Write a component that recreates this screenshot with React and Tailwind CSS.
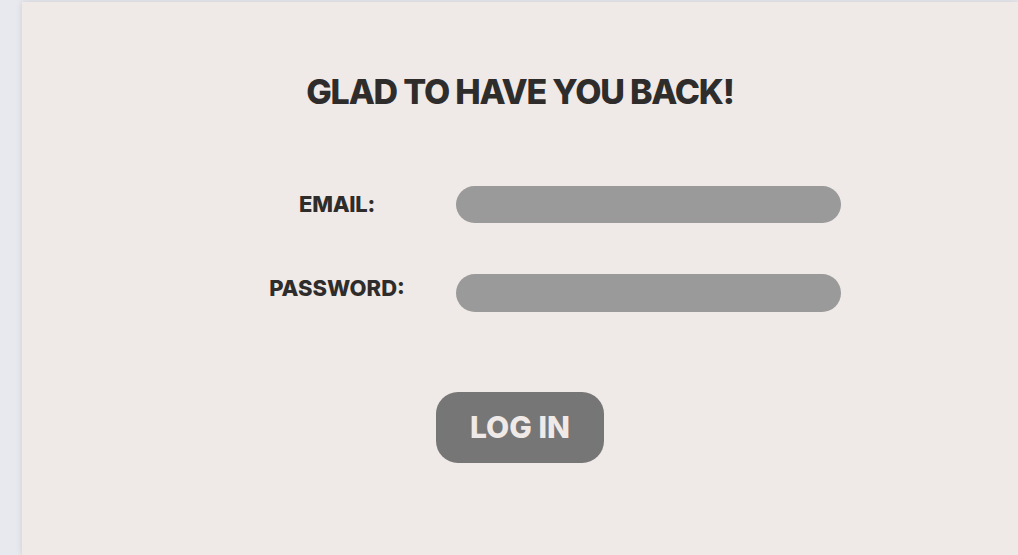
import React from 'react';

export default function App() {
  return (
    <div className="min-h-screen bg-[#e8e9ee] pl-[22px] pt-[2px]" style={{ fontFamily: 'Inter, "Noto Sans", sans-serif' }}>
      <div className="min-h-[553px] bg-[#efeae7] shadow-[0_0_6px_rgba(0,0,0,0.12)]">
        {/* Heading */}
        <h1 className="pt-[67px] text-center text-[34px] font-extrabold leading-[46px] tracking-[-1.2px] text-[#2f2d2c]">
          GLAD TO HAVE YOU BACK!
        </h1>

        {/* Form */}
        <div className="mt-[71px] ml-[225px] flex flex-col gap-[51px]">
          <div className="flex items-center">
            <label className="w-[180px] text-center text-[22px] font-extrabold tracking-[-0.3px] text-[#2f2d2c]">EMAIL:</label>
            <input className="ml-[29px] h-[37px] w-[385px] rounded-full bg-[#9a9a9a] outline-none" />
          </div>
          <div className="flex items-center">
            <label className="w-[180px] -translate-y-[5px] text-center text-[22px] font-extrabold text-[#2f2d2c]">PASSWORD:</label>
            <input type="password" className="ml-[29px] h-[38px] w-[385px] rounded-full bg-[#9a9a9a] outline-none" />
          </div>
        </div>

        {/* Button */}
        <div className="mt-[80px] flex justify-center">
          <button className="h-[71px] w-[168px] rounded-[22px] bg-[#767676] text-[30px] font-extrabold text-[#efeae7]">
            LOG IN
          </button>
        </div>
      </div>
    </div>
  );
}
